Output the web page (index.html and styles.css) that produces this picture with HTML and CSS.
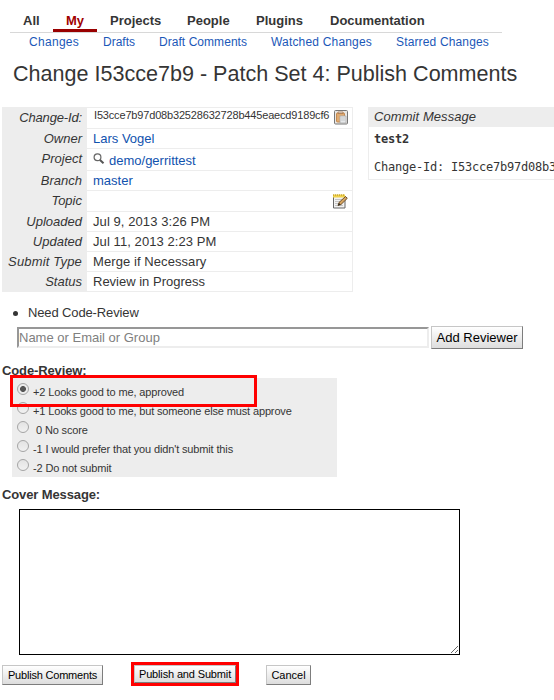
FILE: index.html
```html
<!DOCTYPE html>
<html lang="en">
<head>
<meta charset="utf-8">
<title>Publish Comments</title>
<link rel="stylesheet" href="styles.css">
</head>
<body>
<nav class="menu">
  <a class="all">All</a><a class="my active">My</a><a class="projects">Projects</a><a class="people">People</a><a class="plugins">Plugins</a><a class="docs">Documentation</a>
</nav>
<nav class="submenu">
  <a class="s1">Changes</a><a class="s2">Drafts</a><a class="s3">Draft Comments</a><a class="s4">Watched Changes</a><a class="s5">Starred Changes</a>
</nav>
<h1><span>Change I53cce7b9 - Patch Set 4: Publish Comments</span></h1>
<div class="overview">
  <dl class="info">
    <div class="row r21"><dt class="cid">Change-Id:</dt><dd class="id"><span>I53cce7b97d08b32528632728b445eaecd9189cf6</span>
      <svg class="copy" width="14" height="15" viewBox="0 0 14 15"><rect x=".5" y=".5" width="13" height="13.5" rx="1" fill="#e9e7e4" stroke="#777"/><rect x="2.5" y="3" width="8" height="9" rx="1" fill="#e0ab72" stroke="#c58a50"/><path d="M4 3.5h5V2H4z" fill="#ddd" stroke="#a86f3d" stroke-width=".7"/><path d="M6 6h6v7H6z" fill="#e6e8ea" stroke="#aaa" stroke-width=".8"/><path d="M7 8h4M7 10h4" stroke="#c4c7c9"/></svg></dd></div>
    <div class="row"><dt>Owner</dt><dd class="link">Lars Vogel</dd></div>
    <div class="row r22"><dt>Project</dt><dd class="link project"><svg width="12" height="12" viewBox="0 0 12 12"><circle cx="4.5" cy="4.3" r="3.4" fill="#fff" stroke="#666" stroke-width="1.2"/><path d="M7 7l3.5 3.2" stroke="#555" stroke-width="2"/></svg><span>demo/gerrittest</span></dd></div>
    <div class="row"><dt>Branch</dt><dd class="link">master</dd></div>
    <div class="row r21"><dt>Topic</dt><dd>
      <svg class="edit" width="16" height="16" viewBox="0 0 16 16"><path d="M1.5 3h11.5v12H1.5z" fill="#f2f2f2" stroke="#666"/><path d="M3 6.5h8M3 8.5h7M3 10.5h7M3 12.5h8" stroke="#c4c4c4"/><path d="M1 1.5h12v3H1z" fill="#f0d24c"/><path d="M1 2h12" stroke="#b18a1c" stroke-dasharray="1 1"/><path d="M6 12.5l1-3 6.5-6 1.8 1.8L9 11.5z" fill="#d6a460" stroke="#604420" stroke-width=".9"/><path d="M6 12.5l1-2.5L8.5 11.5z" fill="#222"/></svg></dd></div>
    <div class="row"><dt>Uploaded</dt><dd class="wide">Jul 9, 2013 3:26 PM</dd></div>
    <div class="row"><dt>Updated</dt><dd class="wide">Jul 11, 2013 2:23 PM</dd></div>
    <div class="row"><dt class="type">Submit Type</dt><dd class="wide">Merge if Necessary</dd></div>
    <div class="row"><dt>Status</dt><dd>Review in Progress</dd></div>
  </dl>
  <section class="commit">
    <h2>Commit Message</h2>
    <pre><b>test2</b>

Change-Id: I53cce7b97d08b3</pre>
  </section>
</div>
<ul class="needs"><li>Need Code-Review</li></ul>
<form>
  <div class="reviewer">
    <input type="text" placeholder="Name or Email or Group"><button type="button" class="add">Add Reviewer</button>
  </div>
  <h3 class="review-title">Code-Review:</h3>
  <div class="votes">
    <label><i class="radio on"></i><span>+2 Looks good to me, approved</span></label>
    <label><i class="radio"></i><span>+1 Looks good to me, but someone else must approve</span></label>
    <label><i class="radio"></i><span class="zero">0 No score</span></label>
    <label><i class="radio"></i><span>-1 I would prefer that you didn't submit this</span></label>
    <label><i class="radio"></i><span>-2 Do not submit</span></label>
    <div class="highlight"></div>
  </div>
  <h3 class="cover-title">Cover Message:</h3>
  <textarea></textarea>
  <div class="actions">
    <button type="button" class="publish">Publish Comments</button>
    <div class="marked"><button type="button">Publish and Submit</button></div>
    <button type="button" class="cancel">Cancel</button>
  </div>
</form>
</body>
</html>
```
FILE: styles.css
```css
* { box-sizing: border-box; }
body {
  margin: 0;
  height: 700px;
  overflow: hidden;
  background: #fff;
  color: #353535;
  font: 13px/16px "Liberation Sans", Arial, sans-serif;
}
h1, h2, h3, ul, dl, dd, pre { margin: 0; padding: 0; }
a, span, h3 { white-space: nowrap; }

.menu {
  display: flex;
  width: 492px;
  height: 33px;
  margin-left: 10px;
  padding-top: 12px;
  border-bottom: 1px solid #d8d8d8;
  font-weight: bold;
}
.menu a { padding: 0 13px; height: 20px; line-height: 18px; }
.menu .all { width: 43px; }
.menu .my { width: 44px; }
.menu .projects { width: 77px; }
.menu .people { width: 69px; }
.menu .plugins { width: 74px; }
.menu .active { color: #a00000; border-bottom: 3px solid #900; }

.submenu {
  display: flex;
  height: 26px;
  padding-left: 29px;
  color: #1b58b8;
  font-size: 12px;
  line-height: 18px;
}
.s1 { width: 74px; letter-spacing: .3px; }
.s2 { width: 56px; }
.s3 { width: 112px; letter-spacing: .05px; }
.s4 { width: 125px; letter-spacing: .18px; }
.s5 { letter-spacing: .15px; }

h1 { height: 48px; padding-left: 13px; font-size: 21.55px; font-weight: normal; line-height: 30px; }

.overview { display: flex; height: 185px; padding-left: 2px; }
.info { width: 351px; border: 1px solid #ededed; border-left: 0; border-bottom: 0; flex: none; }
.row { display: flex; height: 20px; }
.row.r21 { height: 21px; }
.row.r22 { height: 22px; }
dt {
  width: 85px;
  padding: 2px 5px 0 0;
  background: #ededed;
  font-style: italic;
  text-align: right;
  line-height: 15px;
}
.cid { letter-spacing: -.15px; }
.type { letter-spacing: .17px; }
dd {
  display: flex;
  flex: 1;
  padding: 2px 4px 0 6px;
  border-bottom: 1px solid #ededed;
  line-height: 15px;
}
.wide { letter-spacing: .08px; }
.link { color: #1052ae; }
.id { padding-left: 7px; font-size: 11px; line-height: 11px; letter-spacing: -.17px; justify-content: space-between; }
.project svg { margin-top: 2px; }
.project span { padding-top: 2px; margin-left: 4px; }
.edit { margin: 0 0 0 auto; }

.commit { width: 186px; height: 73px; flex: none; margin-left: 15px; border: 1px solid #ededed; border-right: 0; overflow: hidden; }
.commit h2 {
  height: 19px;
  padding-left: 5px;
  background: #ededed;
  font-size: 13px;
  font-style: italic;
  font-weight: normal;
  line-height: 18px;
  letter-spacing: .07px;
}
pre { padding: 5px 0 0 5px; font: 12px/14px "DejaVu Sans Mono", monospace; letter-spacing: -.225px; }

.needs { height: 35px; padding: 13px 0 0 28px; letter-spacing: -.13px; }
.needs li { list-style: none; display: flex; align-items: center; height: 16px; }
.needs li::before { content: ""; width: 5px; height: 5px; border-radius: 50%; background: #353535; margin: 0 10px 0 -15px; }

.reviewer { display: flex; height: 37px; padding-left: 17px; }
input, button, textarea { margin: 0; font-family: inherit; color: #000; border-radius: 0; }
input {
  width: 412px;
  height: 21px;
  padding: 0;
  border: 2px solid;
  border-color: #979797 #ededed #ededed #979797;
  font-size: 13px;
}
input::placeholder { color: #808080; }
button {
  padding: 0;
  border: 1px solid;
  border-color: #c6c6c6 #7d7d7d #7d7d7d #c6c6c6;
  background: linear-gradient(#fff, #ddd);
  font-size: 11px;
  white-space: nowrap;
}
.add { width: 92px; height: 23px; margin: -1px 0 0 2px; font-size: 13px; }

h3 { padding-left: 2px; font-size: 13px; line-height: 15px; letter-spacing: -.12px; }
.review-title { height: 15px; margin-top: -1px; }
.votes { position: relative; width: 325px; height: 99px; margin-left: 12px; padding-top: 2px; background: #ededed; }
.votes label { display: flex; height: 19px; padding-left: 5px; font-size: 11px; letter-spacing: -.14px; }
.votes span { margin-left: 4px; line-height: 24px; }
.votes .zero { margin-left: 7px; }
.radio {
  width: 12px;
  height: 12px;
  margin-top: 3px;
  border: 1px solid #a5a5a5;
  border-radius: 50%;
  background: linear-gradient(#e3e3e3, #f1f1f1);
}
.radio.on { background: radial-gradient(circle, #555 0 2.6px, #ececec 3.3px); }
.highlight { position: absolute; left: -2px; top: -3px; width: 247px; height: 32px; border: 3px solid #f00; }
.cover-title { height: 32px; padding-top: 10px; }
textarea { display: block; width: 441px; height: 146px; margin-left: 19px; border: 1px solid #000; background: #fff; resize: both; }
.actions { display: flex; height: 40px; padding: 7px 0 0 2px; }
.publish { width: 101px; height: 20px; margin-top: 3px; letter-spacing: -.2px; }
.marked { width: 108px; height: 24px; margin-left: 28px; border: 3px solid #f00; }
.marked button { display: block; width: 102px; height: 18px; letter-spacing: -.15px; }
.cancel { width: 45px; height: 20px; margin: 3px 0 0 27px; }
```
